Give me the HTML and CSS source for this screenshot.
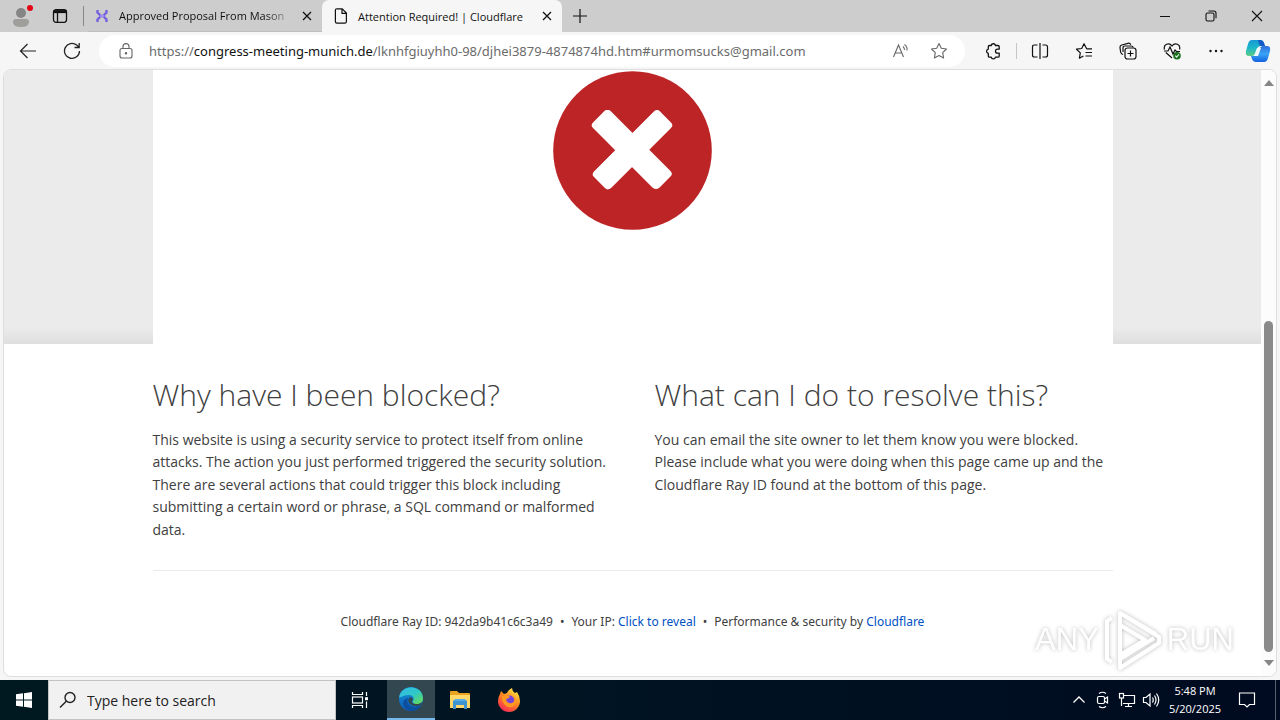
FILE: index.html
```html
<!DOCTYPE html>
<html lang="en">
<head>
<meta charset="utf-8">
<title>Attention Required! | Cloudflare</title>
<link rel="stylesheet" href="styles.css">
</head>
<body>
<header class="tabstrip">
  <button class="icon-btn profile" aria-label="Profile"><svg width="24" height="24" viewBox="0 0 24 24"><circle cx="11" cy="9" r="5" fill="#858585"/><path d="M3 18q0-3 3-3h10q3 0 3 3 0 5-8 5t-8-5z" fill="#a09e9b"/><circle cx="20" cy="4" r="3" fill="#e30613"/></svg></button>
  <button class="icon-btn workspaces" aria-label="Tab actions"><svg width="16" height="16" viewBox="0 0 16 16" fill="none" stroke="#111" stroke-width="1.3"><rect x="1.5" y="1.7" width="13" height="12.6" rx="2.5"/><path d="M1.5 3.6h13" stroke-width="3"/><path d="M5.5 4v10"/></svg></button>
  <span class="strip-line"></span>
  <div class="tab">
    <svg width="14" height="14" viewBox="0 0 14 14" fill="none" stroke="#7560e0" stroke-width="2.4"><path d="M2.500 1v2.500L6 7l-3.500 3.500V13M11.500 1v2.500L8 7l3.500 3.500V13"/><path d="M5 7h4" stroke="#9f8ff0"/></svg>
    <span class="tab-title faded">Approved Proposal From Mason</span>
    <button class="icon-btn close" aria-label="Close tab"><svg width="10" height="10" viewBox="0 0 10 10" stroke="#111" stroke-width="1.3"><path d="M1 1l8 8M9 1l-8 8"/></svg></button>
  </div>
  <div class="tab active">
    <svg width="14" height="16" viewBox="0 0 14 16" fill="none" stroke="#111" stroke-width="1.2"><path d="M2.5.8h5.7l4.2 4.3v8.4q0 1.6-1.6 1.6H2.9q-1.5 0-1.5-1.6V2.3Q1.4.8 2.9.8M8 1v4.4h4.3"/></svg>
    <span class="tab-title">Attention Required! | Cloudflare</span>
    <button class="icon-btn close" aria-label="Close tab"><svg width="10" height="10" viewBox="0 0 10 10" stroke="#111" stroke-width="1.3"><path d="M1 1l8 8M9 1l-8 8"/></svg></button>
  </div>
  <button class="icon-btn newtab" aria-label="New tab"><svg width="14" height="14" viewBox="0 0 14 14" stroke="#111" stroke-width="1.2"><path d="M7 0v14M0 7h14"/></svg></button>
  <div class="window-controls">
    <button class="icon-btn" aria-label="Minimize"><svg width="12" height="12" viewBox="0 0 12 12" stroke="#111"><path d="M1 6.5h10"/></svg></button>
    <button class="icon-btn" aria-label="Restore"><svg width="12" height="12" viewBox="0 0 12 12" fill="none" stroke="#111" stroke-width="1.1"><rect x="1" y="3" width="8" height="8" rx="1.5"/><path d="M3.5 1h5.2q2.3 0 2.3 2.3v5"/></svg></button>
    <button class="icon-btn" aria-label="Close window"><svg width="12" height="12" viewBox="0 0 12 12" stroke="#111" stroke-width="1.1"><path d="M1 1l10 10M11 1L1 11"/></svg></button>
  </div>
</header>

<nav class="toolbar" aria-label="Browser toolbar">
  <button class="icon-btn nav" aria-label="Back"><svg width="18" height="16" viewBox="0 0 18 16" fill="none" stroke="#222" stroke-width="1.2"><path d="M17 8H1.5M8.500 1L1.500 8l7 7"/></svg></button>
  <button class="icon-btn nav" aria-label="Refresh"><svg width="18" height="18" viewBox="0 0 18 18" fill="none" stroke="#222" stroke-width="1.3"><path d="M16.500 9A7.500 7.500 0 1 1 13.700 3.100L16 5.300M16.200 1v4.500h-4.700"/></svg></button>
  <div class="address">
    <svg class="lock" width="14" height="16" viewBox="0 0 14 16" fill="none" stroke="#666" stroke-width="1.1"><rect x="1" y="5.500" width="12" height="9.500" rx="2"/><path d="M4 5.500V3.600a3 3 0 0 1 6 0v1.900"/><circle cx="7" cy="10.300" r=".7" fill="#666"/></svg>
    <div class="url" role="textbox" aria-label="Address" contenteditable="true" spellcheck="false">https://<span class="host">congress-meeting-munich.de</span>/lknhfgiuyhh0-98/djhei3879-4874874hd.htm#urmomsucks@gmail.com</div>
    <button class="icon-btn inbar" aria-label="Read aloud"><svg width="18" height="16" viewBox="0 0 18 16" fill="none" stroke="#666" stroke-width="1.1"><path d="M1.500 14L6.500 2l5 12M3.300 10h6.400M11 3.500q1.500 1.200 1.500 3.500M12.500 1.500q3 2 2.500 6"/></svg></button>
    <button class="icon-btn inbar" aria-label="Add to favorites"><svg width="18" height="18" viewBox="0 0 18 18" fill="none" stroke="#666" stroke-width="1.100" stroke-linejoin="round"><path d="M9 1.500l2.300 4.800 5.200.7-3.800 3.700.9 5.300L9 13.500 4.400 16l.9-5.300L1.500 7l5.200-.7z"/></svg></button>
  </div>
  <div class="tools">
    <button class="icon-btn tool" aria-label="Extensions"><svg width="18" height="18" viewBox="0 0 18 18" fill="none" stroke="#111" stroke-width="1.300" stroke-linejoin="round"><path d="M5.500 3.500h1.700a2.200 2.200 0 0 1 4.300 0H14q1.200 0 1.200 1.200v2.500h-1.700a2 2 0 0 0 0 4h1.700V14q0 1.200-1.200 1.200h-2.500a2.200 2.200 0 0 1-4.300 0H5.500q-1.200 0-1.200-1.200v-2.600a2.200 2.200 0 0 1 0-4.300V4.700q0-1.200 1.200-1.200z"/></svg></button>
    <span class="tool-line"></span>
    <button class="icon-btn tool" aria-label="Split screen"><svg width="18" height="18" viewBox="0 0 18 18" fill="none" stroke="#111" stroke-width="1.200"><path d="M6.500 3H3.300Q1.500 3 1.500 5v8q0 2 1.800 2h3.200M11.500 3h3.200q1.800 0 1.800 2v8q0 2-1.800 2h-3.200M9 1v16"/></svg></button>
    <button class="icon-btn tool" aria-label="Favorites"><svg width="18" height="18" viewBox="0 0 18 18" fill="none" stroke="#111" stroke-width="1.200" stroke-linejoin="round"><path d="M17 6.800h-5.300L9 1.700 6.700 6.500l-5.200.7 3.800 3.700-.9 5.300 4-2.200M10.500 10.500H17M10.500 14H17"/></svg></button>
    <button class="icon-btn tool" aria-label="Collections"><svg width="18" height="18" viewBox="0 0 18 18" fill="none" stroke="#111" stroke-width="1.200"><rect x="6" y="6" width="11" height="11" rx="2.500"/><path d="M11.500 8.500v6M8.500 11.500h6M4 12.500Q2 12 1.600 10L1 5.500Q.8 3.500 2.700 3L9 1.300q2-.5 2.800 1.500M4 10V6q0-2 2-2h6q2 0 2.300 1.500"/></svg></button>
    <button class="icon-btn tool" aria-label="Browser essentials"><svg width="18" height="18" viewBox="0 0 18 18" fill="none" stroke="#111" stroke-width="1.200"><path d="M1.500 7.500C0 2.500 6-.2 9 4c3-4.200 9-1.500 7.500 3.500M2.800 10.500L9 16M1 9h4l2-4 3 7 2-4 1.500 1.500H17"/><circle cx="14" cy="13.700" r="3.800" fill="#1b6e1f" stroke="none"/><path d="M12.200 13.700l1.400 1.400 2.400-2.700" stroke="#d8f0d8"/></svg></button>
    <button class="icon-btn tool" aria-label="Settings and more"><svg width="18" height="18" viewBox="0 0 18 18" fill="#111"><circle cx="3.500" cy="9" r="1.200"/><circle cx="9" cy="9" r="1.200"/><circle cx="14.500" cy="9" r="1.200"/></svg></button>
    <button class="icon-btn copilot" aria-label="Copilot"><svg width="26" height="24" viewBox="0 0 26 24"><defs><linearGradient id="ca" x2="0" y2="1"><stop stop-color="#1598d4"/><stop offset=".5" stop-color="#1cb8c8"/><stop offset="1" stop-color="#5ecb86"/></linearGradient><linearGradient id="cb" x2="0" y2="1"><stop stop-color="#2f6edb"/><stop offset=".5" stop-color="#39a3f5"/><stop offset="1" stop-color="#1463e0"/></linearGradient></defs><path d="M7 1h8q3 0 4 3l1 3h-4q-3 0-4 3l-2 5q-1 2-3 2H4q-4 0-3-5L3 5q1-4 4-4z" fill="url(#ca)"/><path d="M13 1h2q3 0 4 3l1 3h-4q-2 0-2-2z" fill="#155bc8"/><path d="M19 23h-8q-3 0-4-3l-1-3h3q3 0 4-3l2-5q1-2 3-2h4q4 0 3 5l-2 7q-1 4-4 4z" fill="url(#cb)"/><path d="M12 9h4l-3 8H9z" fill="#eefbff"/></svg></button>
  </div>
</nav>

<div class="viewport">
  <main class="page">
    <section class="hero">
      <div class="shot">
        <svg width="160" height="160" viewBox="0 0 160 160" role="img" aria-label="Blocked"><circle cx="79.500" cy="80.500" r="79.300" fill="#bd2426"/><g fill="#fff"><rect x="-46" y="-11.700" width="92" height="23.400" rx="4" transform="translate(78 79.500) rotate(45)"/><rect x="-46" y="-11.700" width="92" height="23.400" rx="4" transform="translate(79 80) rotate(-45)"/><rect x="-46" y="-11.700" width="92" height="23.400" rx="4" transform="translate(79.500 79.500) rotate(45)"/><rect x="-46" y="-11.700" width="92" height="23.400" rx="4" transform="translate(80 79.500) rotate(-45)"/></g></svg>
      </div>
    </section>
    <section class="columns">
      <article>
        <h2>Why have I been blocked?</h2>
        <p>This website is using a security service to protect itself from online attacks. The action you just performed triggered the security solution. There are several actions that could trigger this block including submitting a certain word or phrase, a SQL command or malformed data.</p>
      </article>
      <article>
        <h2>What can I do to resolve this?</h2>
        <p>You can email the site owner to let them know you were blocked. Please include what you were doing when this page came up and the Cloudflare Ray ID found at the bottom of this page.</p>
      </article>
    </section>
    <footer class="footer">
      <span>Cloudflare Ray ID: 942da9b41c6c3a49</span>
      <span class="dot">•</span>
      <span>Your IP: <button class="reveal">Click to reveal</button></span>
      <span class="dot">•</span>
      <span>Performance &amp; security by <a href="#">Cloudflare</a></span>
    </footer>
  </main>
  <div class="scrollbar" aria-hidden="true">
    <svg width="10" height="6" viewBox="0 0 10 6" fill="#858585"><path d="M0 6l5-6 5 6z"/></svg>
    <div class="track"><div class="thumb"></div></div>
    <svg width="10" height="6" viewBox="0 0 10 6" fill="#858585"><path d="M0 0l5 6 5-6z"/></svg>
  </div>
  <div class="watermark">
    <span>ANY</span>
    <svg width="60" height="64" viewBox="0 0 60 64" fill="none" stroke="#fff" stroke-width="4" stroke-linejoin="round"><path d="M9 10L4 13v38l5 3M17 50V5l39 24v6L17 60v-9l34-21M17 5l36 21M17 17v30l25-15z"/></svg>
    <span>RUN</span>
  </div>
</div>

<footer class="taskbar">
  <button class="icon-btn start" aria-label="Start"><svg width="16" height="16" viewBox="0 0 16 16" fill="#fff"><path d="M0 2.300L7 1.300v6.200H0zM8 1.200L16 0v7.500H8zM0 8.500h7v6.200l-7-1zM8 8.500h8V16l-8-1.200z"/></svg></button>
  <label class="search">
    <svg width="18" height="18" viewBox="0 0 18 18" fill="none" stroke="#222" stroke-width="1.400"><circle cx="11" cy="6.500" r="5"/><path d="M7.500 10L1 16.500"/></svg>
    <input type="text" placeholder="Type here to search" aria-label="Search">
  </label>
  <button class="icon-btn app" aria-label="Task view"><svg width="18" height="18" viewBox="0 0 18 18" fill="none" stroke="#fff" stroke-width="1.200"><path d="M1.500 1v2.500h10V1M1.500 17v-2.500h10V17M15.500 1v4M15.500 10.500V17"/><rect x="1.500" y="6" width="10" height="6"/><path d="M14 7.700h3" stroke-width="3"/></svg></button>
  <button class="icon-btn app current" aria-label="Microsoft Edge"><svg width="26" height="26" viewBox="0 0 26 26"><defs><linearGradient id="ea" y2="1"><stop stop-color="#36b9e8"/><stop offset=".5" stop-color="#2ec8c9"/><stop offset="1" stop-color="#6bdc4b"/></linearGradient><linearGradient id="eb" x2="0" y2="1"><stop stop-color="#1693d8"/><stop offset="1" stop-color="#0d5cb8"/></linearGradient></defs><circle cx="13" cy="13" r="12" fill="url(#eb)"/><path d="M1.200 11C3-2 25-2 25 12.500c0 4-3 5.500-6 5.500-3.500 0-5-1.500-4-3 2-3-.5-6-4-6-5 0-8 3-9.800 2z" fill="url(#ea)"/><path d="M10 12c-3 6 4 12 13 7-3 6-9 7-13 5-7-4-6-11 0-12z" fill="#0c4f9e"/><path d="M14 15c-1 1.500.5 3 5 3 2 0 3.500-.5 5-2l-.8 3C17 22 9 18.500 10.500 13q2-3 4-.5.500 1-.5 2.500z" fill="#334750"/></svg></button>
  <button class="icon-btn app" aria-label="File Explorer"><svg width="22" height="20" viewBox="0 0 22 20"><path d="M1 2q0-1 1-1h6l2 2h10q1 0 1 1v14H1z" fill="#e8a320"/><path d="M1 5h20v13H1z" fill="#ffd869"/><path d="M4 11h14v8h-3v-4H7v4H4z" fill="#3e94d1"/><path d="M6 9h10l2 2H4z" fill="#55aee6"/></svg></button>
  <button class="icon-btn app" aria-label="Firefox"><svg width="24" height="24" viewBox="0 0 24 24"><defs><linearGradient id="fa" x1=".8" x2=".2" y2="1"><stop stop-color="#fff04a"/><stop offset=".45" stop-color="#ff8a1e"/><stop offset="1" stop-color="#f5225b"/></linearGradient></defs><path d="M3 6l1-3 3 3 3-1q1-3 5-5 0 3 3 5l2-1q3 4 3 9a11 11 0 0 1-22 0q0-4 2-7z" fill="url(#fa)"/><circle cx="12.500" cy="12.500" r="5" fill="#7643d8"/><path d="M5 8q5-2 8 1-2 2-4 2 1 5 6 4 3-1 2-5 4 3 1 7-4 4-9 1-5-4-4-10z" fill="#ff9822"/></svg></button>
  <div class="tray">
    <button class="icon-btn" aria-label="Show hidden icons"><svg width="14" height="14" viewBox="0 0 14 14" fill="none" stroke="#fff" stroke-width="1.300"><path d="M1.500 9.500L7 4l5.500 5.500"/></svg></button>
    <button class="icon-btn" aria-label="Meet now"><svg width="14" height="18" viewBox="0 0 14 18" fill="none" stroke="#fff" stroke-width="1.200"><rect x="1.500" y="5.500" width="7" height="7" rx="1.500"/><path d="M8.500 8l3-2v6l-3-2M3 2.500q3.500-2.500 7 0M3 15.500q3.500 2.500 7 0"/></svg></button>
    <button class="icon-btn" aria-label="Network"><svg width="18" height="16" viewBox="0 0 18 16" fill="none" stroke="#fff" stroke-width="1.200"><path d="M6 3.500h10.500v8H5M10.500 11.500v3M7 14.500h7M3.500 6v8"/><rect x="1.500" y="1.500" width="4" height="4.500"/></svg></button>
    <button class="icon-btn" aria-label="Volume"><svg width="18" height="16" viewBox="0 0 18 16" fill="none" stroke="#fff" stroke-width="1.200"><path d="M1.500 5.500h2.500l4-3.500v12l-4-3.500H1.500zM10.500 5.500q1.500 2.500 0 5M12.500 3.500q3 4.500 0 9M14.500 1.500q4.500 6.500 0 13"/></svg></button>
    <time class="clock"><span>5:48 PM</span><span>5/20/2025</span></time>
    <button class="icon-btn notes" aria-label="Notifications"><svg width="18" height="18" viewBox="0 0 18 18" fill="none" stroke="#fff" stroke-width="1.200"><path d="M1.500 2h15v11.500h-5L9 16l-2.500-2.500h-5z"/></svg></button>
  </div>
</footer>
</body>
</html>
```

FILE: styles.css
```css
* { box-sizing: border-box; }
body {
  margin: 0;
  height: 100vh;
  display: flex;
  flex-direction: column;
  overflow: hidden;
  background: #f6f6f6;
  color: #404040;
  font-family: "Open Sans", "Noto Sans", sans-serif;
}
button, input { font: inherit; }
svg { flex: none; }
.icon-btn {
  display: flex;
  align-items: center;
  justify-content: center;
  flex: none;
  padding: 0;
  border: 0;
  background: none;
}

/* Tab strip */
.tabstrip {
  display: flex;
  align-items: stretch;
  flex: none;
  height: 32px;
  background: #cdcdcd;
  color: #111;
  font-size: 11px;
}
.profile { width: 44px; }
.workspaces { width: 32px; }
.strip-line { width: 1px; margin: 6px 4px 6px 7px; background: #888; }
.tab {
  display: flex;
  align-items: center;
  gap: 10px;
  width: 234px;
  padding: 0 3px 0 7px;
  border-bottom: 1px solid #bdbdbd;
}
.tab.active {
  width: 240px;
  padding-left: 12px;
  border: 0;
  border-radius: 7px 7px 0 0;
  background: #f6f6f6;
}
.tab-title {
  flex: 1;
  min-width: 0;
  white-space: nowrap;
}
.faded {
  -webkit-mask-image: linear-gradient(90deg, #000 88%, rgba(0, 0, 0, .3));
  mask-image: linear-gradient(90deg, #000 88%, rgba(0, 0, 0, .3));
}
.close { width: 24px; height: 24px; }
.newtab { width: 36px; }
.window-controls { display: flex; margin-left: auto; }
.window-controls .icon-btn { width: 46px; }

/* Toolbar */
.toolbar {
  display: flex;
  align-items: center;
  flex: none;
  height: 37px;
  padding-left: 6px;
}
.nav { width: 44px; }
.address {
  display: flex;
  align-items: center;
  flex: 1;
  min-width: 0;
  height: 32px;
  margin-left: 5px;
  padding: 0 7px 0 20px;
  border-radius: 16px;
  background: #fff;
}
.url {
  flex: 1;
  min-width: 0;
  margin-left: 16px;
  overflow: hidden;
  white-space: nowrap;
  color: #6b6b6b;
  font-family: "Noto Sans", sans-serif;
  font-size: 13px;
}
.host { color: #111; }
.inbar { width: 38px; }
.tools { display: flex; align-items: center; padding: 0 2px 0 6px; }
.tool { width: 44px; }
.tool-line { width: 1px; height: 16px; margin: 0 1px; background: #c6c6c6; }
.copilot { width: 40px; }

/* Page viewport */
.viewport {
  position: relative;
  display: flex;
  flex: 1;
  min-height: 0;
  margin: 0 3px 3px;
  border: 1px solid #dedede;
  border-radius: 8px;
  overflow: hidden;
  background: #fff;
}
.page { flex: 1; min-width: 0; }
.hero {
  display: flex;
  justify-content: center;
  background: linear-gradient(#ebebeb calc(100% - 16px), #dedede);
}
.shot {
  display: flex;
  justify-content: center;
  width: 100%;
  max-width: 960px;
  padding-bottom: 114px;
  background: #fff;
}
.columns {
  display: grid;
  grid-template-columns: 1fr 1fr;
  gap: 44px;
  max-width: 960px;
  margin: 0 auto;
  padding: 29px 0;
  border-bottom: 1px solid #ebebeb;
}
h2 {
  margin: 0 0 13px;
  font-size: 30px;
  font-weight: 300;
  line-height: 43px;
}
p { margin: 0; font-size: 14px; line-height: 1.6; }
.footer {
  display: flex;
  justify-content: center;
  gap: 7px;
  padding: 41px 0;
  font-family: "Noto Sans", sans-serif;
  font-size: 12px;
  line-height: 20px;
}
.footer a, .reveal { color: #0051c3; text-decoration: none; }
.reveal { padding: 0; border: 0; background: none; }
.scrollbar {
  display: flex;
  flex-direction: column;
  align-items: center;
  flex: none;
  width: 15px;
  padding: 10px 0;
  background: #fcfcfc;
}
.track {
  display: flex;
  flex: 1;
  align-items: flex-end;
  padding: 5px 0 8px;
}
.thumb { width: 9px; height: 59%; border-radius: 5px; background: #8a8a8a; }

.watermark {
  position: absolute;
  right: 42px;
  bottom: 4px;
  display: flex;
  align-items: center;
  gap: 4px;
  color: #fff;
  font-family: "Liberation Sans", sans-serif;
  font-size: 31px;
  filter: drop-shadow(0 0 2px #bbb);
  pointer-events: none;
}

/* Taskbar */
.taskbar {
  display: flex;
  flex: none;
  height: 40px;
  background: linear-gradient(90deg, #001820, #001222 60%, #000a20);
  color: #fff;
}
.start { width: 48px; }
.search {
  display: flex;
  align-items: center;
  gap: 10px;
  width: 288px;
  padding-left: 10px;
  border: 1px solid #c2c2c2;
  background: #f1f1f1;
}
.search input {
  flex: 1;
  min-width: 0;
  padding: 0;
  border: 0;
  outline: 0;
  background: none;
  font-size: 14px;
}
.search input::placeholder { color: #222; opacity: 1; }
.app { width: 48px; margin-right: 1px; }
.current { margin-left: 2px; background: #334750; border-bottom: 2px solid #76b9ed; }
.tray { display: flex; margin-left: auto; border-right: 1px solid #59616c; margin-right: 4px; }
.tray .icon-btn { width: 24px; }
.clock {
  display: flex;
  flex-direction: column;
  align-items: center;
  justify-content: center;
  width: 64px;
  font-size: 11px;
  line-height: 18px;
}
.tray .notes { width: 40px; margin-right: 8px; }
```
